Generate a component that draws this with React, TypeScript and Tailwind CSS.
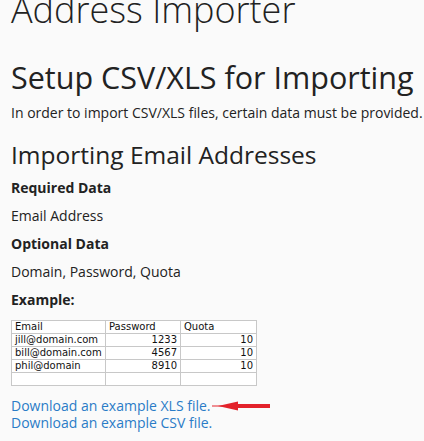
const rows = [
  ["jill@domain.com", "1233", "10"],
  ["bill@domain.com", "4567", "10"],
  ["phil@domain", "8910", "10"],
  ["", "", ""],
]

function ExampleSheet() {
  return (
    <table className="w-[245px] table-fixed border-collapse bg-white font-['DejaVu_Sans',sans-serif] text-[10px] leading-[12px] text-[#111]">
      <tbody>
        <tr className="h-[13px]">
          <td className="w-[94px] border border-[#c8c8c8] px-[3px]">Email</td>
          <td className="w-[75px] border border-[#c8c8c8] px-[3px]">Password</td>
          <td className="w-[76px] border border-[#c8c8c8] px-[3px]">Quota</td>
        </tr>
        {rows.map((r, i) => (
          <tr key={i} className="h-[13px]">
            <td className="border border-[#c8c8c8] px-[3px]">{r[0]}</td>
            <td className="border border-[#c8c8c8] px-[3px] text-right">{r[1]}</td>
            <td className="border border-[#c8c8c8] px-[3px] text-right">{r[2]}</td>
          </tr>
        ))}
      </tbody>
    </table>
  )
}

export default function App() {
  return (
    <div className="h-[441px] overflow-hidden bg-[#fafafa] px-[11px] font-['Open_Sans',sans-serif] text-[#222]">
      <h1 className="mt-[-14px] whitespace-nowrap text-[36px] font-light leading-[48px]">Address Importer</h1>
      <h2 className="mt-[23px] whitespace-nowrap text-[30.5px] leading-[40px]">Setup CSV/XLS for Importing</h2>
      <p className="mt-[6px] whitespace-nowrap text-[14px] leading-[20px]">
        In order to import CSV/XLS files, certain data must be provided.
      </p>
      <h3 className="mt-[15px] whitespace-nowrap text-[24.5px] leading-[34px]">Importing Email Addresses</h3>
      <div className="mt-[6px] flex flex-col gap-[8px] text-[14px] leading-[20px]">
        <p className="font-bold">Required Data</p>
        <p>Email Address</p>
        <p className="font-bold">Optional Data</p>
        <p>Domain, Password, Quota</p>
        <p className="font-bold">Example:</p>
      </div>
      <div className="mt-[10px]">
        <ExampleSheet />
      </div>
      <div className="mt-[11px] text-[14px] leading-[17px] text-[#2a7cc7]">
        <div className="flex items-center">
          <a href="#">Download an example XLS file.</a>
          <svg width="58" height="10" viewBox="0 0 58 10" className="ml-[1px]">
            <line x1="0" y1="5" x2="10" y2="5" stroke="#e3222b" strokeWidth="1" />
            <polygon points="6,5 26,0.5 26,9.5" fill="#e3222b" />
            <rect x="24" y="3" width="34" height="4" fill="#e3222b" />
          </svg>
        </div>
        <a href="#" className="block">Download an example CSV file.</a>
      </div>
    </div>
  )
}
